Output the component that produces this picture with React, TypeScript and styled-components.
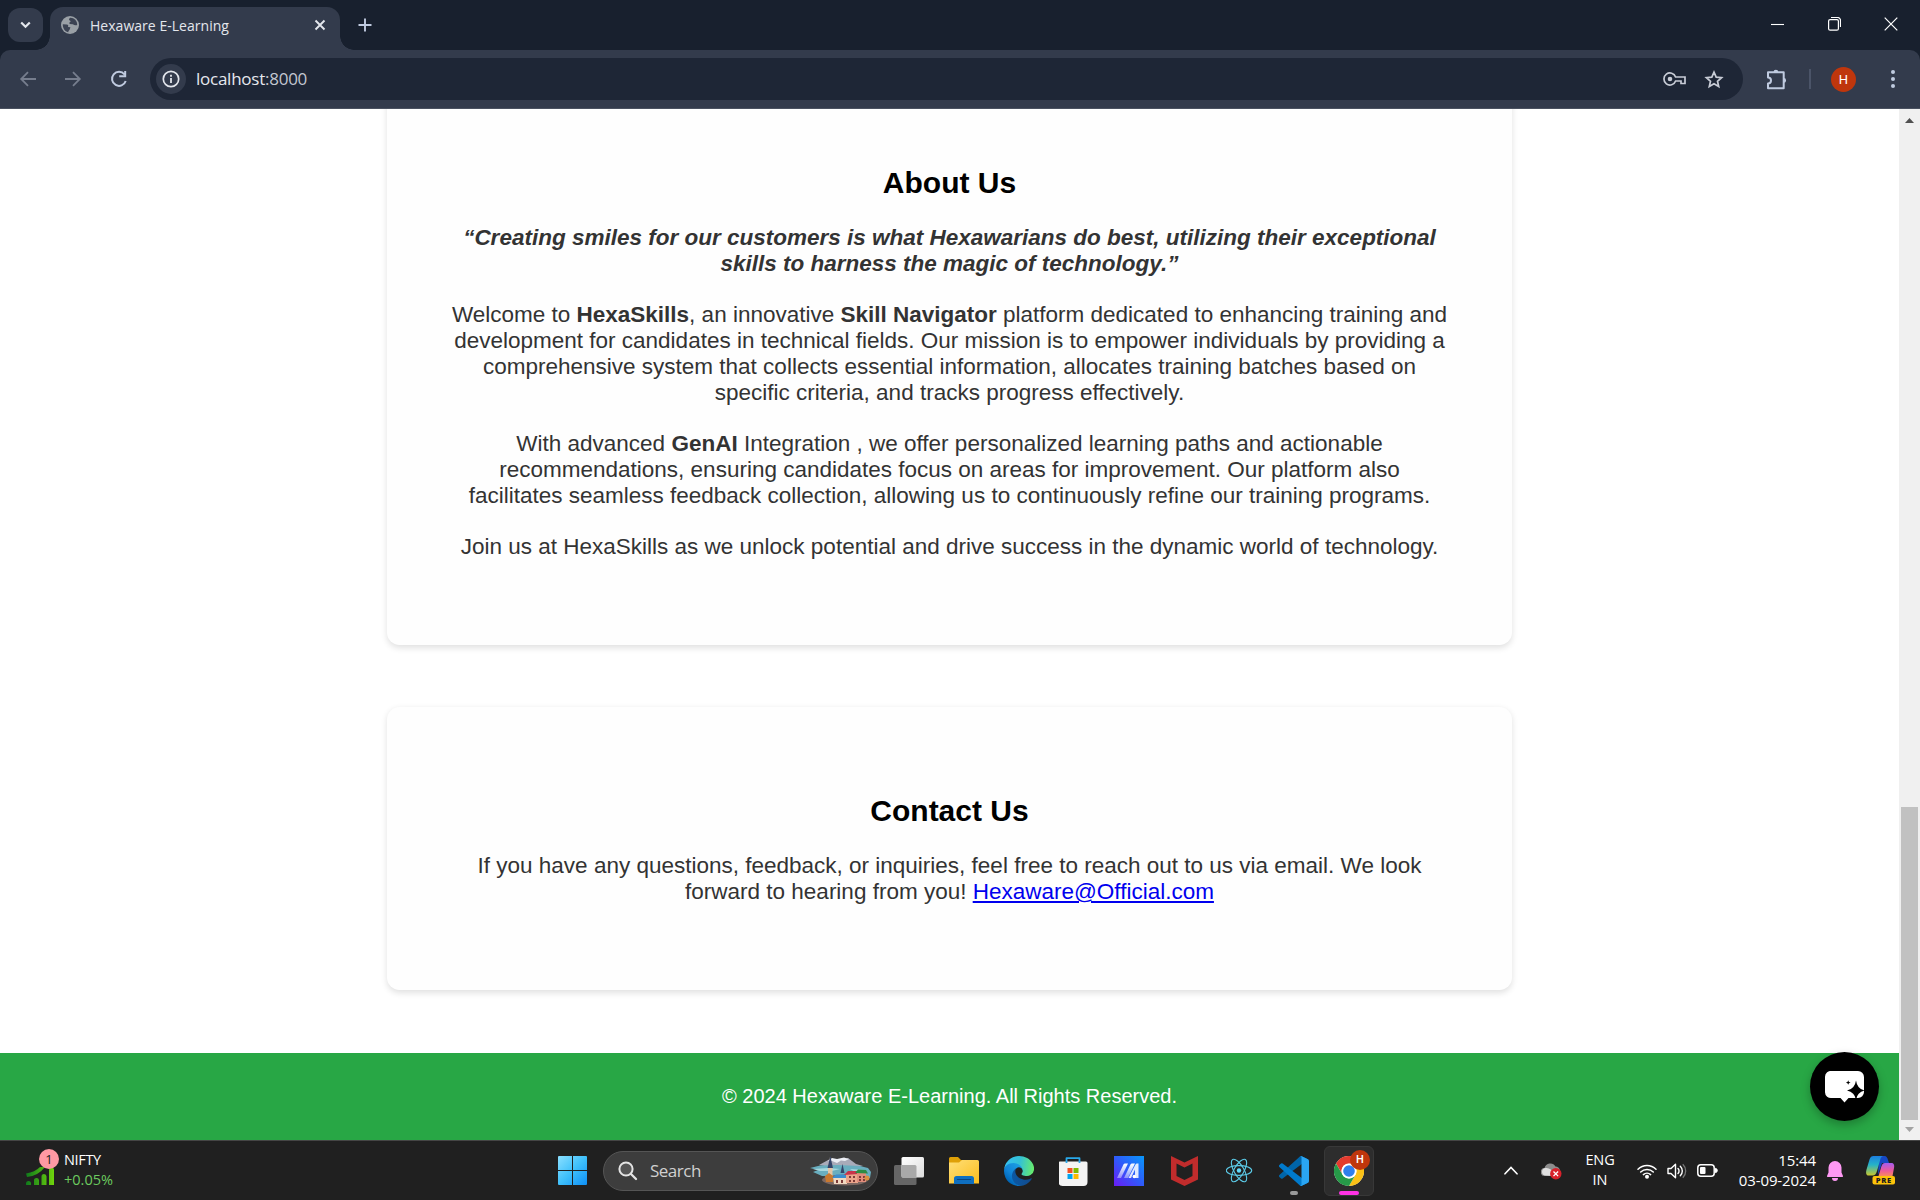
import React from 'react';
import styled, { createGlobalStyle } from 'styled-components';

const Global = createGlobalStyle`
  * { box-sizing: border-box; }
  html, body { margin: 0; padding: 0; overflow: hidden; background: #fff; }
  svg { display: block; flex: none; }
`;

const uiFont = `"Open Sans", "Noto Sans", sans-serif`;

const Screen = styled.div`
  width: 1920px; height: 1200px; display: flex; flex-direction: column;
  font-family: ${uiFont}; overflow: hidden;
`;

/* ---------- browser chrome ---------- */
const TabStrip = styled.div`
  height: 50px; flex: none; background: #18202e; display: flex; align-items: flex-start; padding-left: 8px;
`;
const TabSearch = styled.div`
  width: 35px; height: 34px; margin-top: 8px; border-radius: 12px; background: #333b4c;
  display: flex; align-items: center; justify-content: center;
`;
const Tab = styled.div`
  position: relative; width: 290px; height: 43px; margin: 7px 0 0 7px; border-radius: 13px 13px 0 0; background: #333b4c;
  display: flex; align-items: center; padding: 0 13px 7px 11px; color: #e3e6ec; font-size: 14px;
  &::before, &::after { content: ''; position: absolute; bottom: 0; width: 14px; height: 14px; }
  &::before { left: -14px; background: radial-gradient(circle at 0 0, transparent 13.5px, #333b4c 14px); }
  &::after { right: -14px; background: radial-gradient(circle at 100% 0, transparent 13.5px, #333b4c 14px); }
`;
const TabTitle = styled.span`
  flex: 1; margin-left: 11px; line-height: 20px; letter-spacing: 0.03px; white-space: nowrap; padding-top: 1px;
`;
const NewTab = styled.div`margin: 18px 0 0 18px;`;
const WindowButtons = styled.div`
  margin-left: auto; display: flex; align-items: center; gap: 43px; padding: 17px 22px 0 0;
`;
const ToolbarWrap = styled.div`background: #18202e; flex: none;`;
const Toolbar = styled.div`
  height: 59px; background: #333b4c; border-radius: 10px 10px 0 0; border-bottom: 1px solid #4a5160;
  display: flex; align-items: center; padding: 0 15px 0 18px;
`;
const NavButtons = styled.div`display: flex; align-items: center; gap: 27px; width: 132px; padding-left: 1px;`;
const Omnibox = styled.div`
  width: 1593px; height: 42px; border-radius: 21px; background: #1e2636; display: flex; align-items: center; padding: 0 19px 0 6px;
`;
const InfoChip = styled.div`
  width: 30px; height: 30px; border-radius: 50%; background: #333b4c; display: flex; align-items: center; justify-content: center;
`;
const Url = styled.span`
  margin-left: 10px; flex: 1; font-size: 17px; letter-spacing: -0.25px; line-height: 24px; color: #e6e8ee;
  span { color: #c3c7d1; }
`;
const OmniIcons = styled.div`display: flex; align-items: center; gap: 17px;`;
const ToolbarRight = styled.div`display: flex; align-items: center; padding-left: 23px;`;
const Divider = styled.div`width: 2px; height: 20px; background: #4b5468; margin: 0 20px 0 21px;`;
const Avatar = styled.div<{ $size: number }>`
  width: ${p => p.$size}px; height: ${p => p.$size}px; border-radius: 50%; background: #bf360c; color: #fff;
  display: flex; align-items: center; justify-content: center;
  font: ${p => (p.$size > 20 ? '400 13px' : '500 11px')}/1 Roboto, sans-serif;
`;
const MenuDots = styled.div`margin-left: 35px;`;

/* ---------- page ---------- */
const Viewport = styled.div`
  height: 1031px; flex: none; display: flex; background: #fff; position: relative;
  font-family: "Liberation Sans", Arial, sans-serif;
`;
const Page = styled.div`
  width: 1899px; height: 1031px; overflow: hidden; display: flex; flex-direction: column; align-items: center;
`;
const Card = styled.section<{ $first?: boolean }>`
  width: 1125px; height: ${p => (p.$first ? 556 : 283)}px; flex: none; background: #fefefe;
  margin-top: ${p => (p.$first ? -20 : 62)}px; padding-top: ${p => (p.$first ? 77 : 87)}px;
  border-radius: 12.5px; box-shadow: 0 2.5px 6px rgba(0, 0, 0, 0.12); text-align: center;
`;
const Heading = styled.h2`
  margin: 0 0 25px; font-size: 30px; line-height: 34px; font-weight: 700; color: #000;
`;
const Para = styled.p<{ $quote?: boolean }>`
  margin: 0 0 25px; font-size: 22.5px; line-height: 26px; color: #333;
  font-weight: ${p => (p.$quote ? 700 : 400)}; font-style: ${p => (p.$quote ? 'italic' : 'normal')};
`;
const Line = styled.span`
  display: block; white-space: nowrap;
`;
const Mail = styled.a`color: #0000ee; text-decoration: underline;`;
const Footer = styled.footer`
  width: 100%; height: 88px; margin-top: 63px; flex: none; background: #28a745; color: #fff;
  display: flex; align-items: center; justify-content: center; padding-bottom: 2px; font-size: 20px;
`;
const Scrollbar = styled.div`
  width: 21px; background: #f0f0f0; display: flex; flex-direction: column; align-items: center; padding: 9px 0 8px;
`;
const Thumb = styled.div`width: 17px; height: 313px; margin: auto 0 7px; background: #c1c1c1;`;
const ChatButton = styled.div`
  position: absolute; left: 1810px; top: 943px; width: 69px; height: 69px; border-radius: 50%; background: #000;
  box-shadow: 0 4px 10px rgba(0, 0, 0, 0.25); display: flex; align-items: center; justify-content: center;
`;

/* ---------- taskbar ---------- */
const Taskbar = styled.div`
  height: 60px; flex: none; background: #202020; border-top: 1px solid #454545; display: flex; align-items: center;
  color: #fff; font-size: 15px;
`;
const Widget = styled.div`display: flex; align-items: center; width: 532px; padding-left: 26px;`;
const WidgetIcon = styled.div`position: relative; width: 34px; height: 42px; padding-top: 17px;`;
const Count = styled.div`
  position: absolute; left: 13px; top: -1px; width: 20px; height: 20px; border-radius: 50%; background: #ff99a4; color: #222;
  font-size: 13px; line-height: 20px; text-align: center;
`;
const WidgetText = styled.div`
  margin: 0 0 2px 4px; font-size: 14.5px; line-height: 20px; letter-spacing: -0.35px;
  b { display: block; font-weight: 400; }
  span { color: #6ccb5f; letter-spacing: 0; }
`;
const Slot = styled.div<{ $active?: boolean }>`
  position: relative; width: 50px; height: 50px; margin-right: 5px; border-radius: 6px; display: flex; align-items: center; justify-content: center;
  background: ${p => (p.$active ? '#2d2d2d' : 'transparent')};
  border: 1px solid ${p => (p.$active ? '#383838' : 'transparent')};
`;
const Indicator = styled.div<{ $w: number; $color: string }>`
  position: absolute; bottom: 0; left: 50%; width: ${p => p.$w}px; height: 4px; margin-left: ${p => -p.$w / 2}px;
  border-radius: 2px; background: ${p => p.$color};
`;
const Badge = styled.div`position: absolute; right: 3px; top: 3px;`;
const Start = styled.div`width: 71px; padding-left: 26px;`;
const SearchBox = styled.div`
  width: 275px; height: 40px; border-radius: 20px; background: #3d3d3d; border: 1px solid #555; display: flex; align-items: center;
  padding: 0 5px 0 14px; margin-right: 6px;
`;
const SearchLabel = styled.span`flex: 1; margin-left: 12px; font-size: 17px; letter-spacing: -0.5px; color: #d0d0d0; line-height: 24px;`;
const Tray = styled.div`margin-left: auto; display: flex; align-items: center; padding-right: 25px;`;
const Lang = styled.div`width: 40px; margin: 0 17px 2px 18px; text-align: center; font-size: 14.5px; line-height: 20px; letter-spacing: -0.1px;`;
const Clock = styled.div`width: 98px; margin-bottom: 2px; text-align: right; font-size: 15px; line-height: 20px; letter-spacing: -0.1px; white-space: nowrap;`;
const TrayIcon = styled.div<{ $l: number }>`margin-left: ${p => p.$l}px;`;

const Globe = () => (
  <svg width="18" height="18" viewBox="0 0 18 18">
    <circle cx="9" cy="9" r="9" fill="#9aa0a6" />
    <path d="M1.8 8.2 L5.8 8.6 C7.3 8.8 7.6 9.9 7 11 L9.4 11.2 L8.8 13.2 C8.4 14.2 7.4 14.6 7.2 16.2 C3.9 15.3 1.6 12.2 1.8 8.2Z M9.2 1.8 C7.8 2.6 7.6 4.2 8.8 4.6 C10.3 5 9.5 6.3 8.4 6.6 L8.6 8 L11.8 8.2 C13.2 9.3 14.6 9.6 16.2 9 C16.4 4.8 13 1.6 9.2 1.8Z" fill="#3c4353" />
  </svg>
);

const WindowsLogo = () => (
  <svg width="29" height="29" viewBox="0 0 29 29">
    <defs><linearGradient id="win" x1="0" y1="0" x2="29" y2="29" gradientUnits="userSpaceOnUse"><stop stopColor="#8be0ff" /><stop offset=".5" stopColor="#3fc0fb" /><stop offset="1" stopColor="#0e8ff5" /></linearGradient></defs>
    <path d="M1 0h13v14H0V1a1 1 0 0 1 1-1zM15 0h13a1 1 0 0 1 1 1v13H15zM0 15h14v14H1a1 1 0 0 1-1-1zM15 15h14v13a1 1 0 0 1-1 1H15z" fill="url(#win)" />
  </svg>
);

const Town = () => (
  <svg width="62" height="30" viewBox="0 0 62 30">
    <path d="M9 9 L20 3 L28 5 L38 2 L46 8 L53 10 L30 13Z" fill="#a9abb9" />
    <path d="M18 5 L22 2 L27 3 L34 1.500 L39 3 L35 5 L31 4.500 L27 7 L22 5Z" fill="#eceef4" />
    <path d="M0 12 L10 9.500 L28 9 L50 10 L58 12 L61 16 L60 22 L12 20 L3 16 L8 14Z" fill="#69aebf" />
    <path d="M3 13 L18 12 L30 13 L22 15 L10 15Z M40 13 L55 14 L45 16Z" fill="#a7d8df" />
    <ellipse cx="35" cy="24" rx="23" ry="5.500" fill="#7d6862" />
    <path d="M18 26 V11 L20 1 L22.500 11 V26Z" fill="#e3c5a5" /><path d="M17.500 12 L20.300 0 L23 12Z" fill="#34456b" />
    <path d="M30.500 17 L32.500 8 L34.500 17Z" fill="#34456b" />
    <path d="M15 20 l4-3 4 3 v6 h-7z" fill="#c9792f" />
    <path d="M23 21 h14 v7 h-13z" fill="#f0d9c0" /><path d="M22 22 L26 18.500 L35 18.500 L38 22Z" fill="#3a8ed0" />
    <path d="M36 18 h12 v9 h-12z" fill="#eba58b" /><path d="M34 19 L38 15 L47 15 L49 18Z" fill="#c9334a" />
    <path d="M47 16 h9 v10 h-9z" fill="#e08d7b" /><path d="M45 17 L48 13.500 L56 14 L58 17.500Z" fill="#2c8c44" />
    <path d="M26 24h2v3h-2zM31 24h2v3h-2zM39 20h2v2h-2zM43 20h2v2h-2zM39 24h2v2h-2zM43 24h2v2h-2zM49 20h2v2h-2zM53 20h2v2h-2zM49 23h2v2h-2zM53 23h2v2h-2z" fill="#7d3b38" />
    <circle cx="57" cy="22" r="2.500" fill="#d98f3f" />
  </svg>
);

const TaskView = () => (
  <svg width="30" height="28" viewBox="0 0 30 28">
    <defs><linearGradient id="tv" x1="0" y1="0" x2="1" y2="1"><stop stopColor="#fff" /><stop offset="1" stopColor="#dcdcdc" /></linearGradient></defs>
    <rect x="0" y="8" width="22.500" height="20" rx="1.500" fill="#666" />
    <rect x="7.500" y="0" width="22.500" height="20.500" rx="1.500" fill="url(#tv)" />
    <path d="M7.500 8H21a1.500 1.500 0 0 1 1.500 1.500v11H9a1.500 1.500 0 0 1-1.500-1.500z" fill="#a9a9a9" />
  </svg>
);

const Folder = () => (
  <svg width="30" height="27" viewBox="0 0 30 27">
    <defs><linearGradient id="fo" x1="0" y1="0" x2="1" y2="1"><stop stopColor="#ffdf78" /><stop offset="1" stopColor="#fbbd1d" /></linearGradient></defs>
    <path d="M0 1.500A1.500 1.500 0 0 1 1.500 0H9l3 3h16v5H0z" fill="#dfa007" />
    <path d="M0 5.500h10l3-2.500h15.500A1.500 1.500 0 0 1 30 4.500V26.500H0z" fill="url(#fo)" />
    <path d="M5 27V21.500A2.500 2.500 0 0 1 7.500 19h15a2.500 2.500 0 0 1 2.500 2.500V27z" fill="#0f6fc0" />
    <path d="M8.500 22.500h13" stroke="#0a4580" strokeWidth="1.200" strokeLinecap="round" />
  </svg>
);

const Edge = () => (
  <svg width="30" height="30" viewBox="0 0 256 256">
    <defs>
      <linearGradient id="e1" x1="63" y1="177" x2="242" y2="177" gradientUnits="userSpaceOnUse"><stop stopColor="#0c59a4" /><stop offset="1" stopColor="#114a8b" /></linearGradient>
      <linearGradient id="e2" x1="157" y1="100" x2="46" y2="221" gradientUnits="userSpaceOnUse"><stop stopColor="#1b9de2" /><stop offset=".6" stopColor="#1184d8" /><stop offset="1" stopColor="#0067b8" /></linearGradient>
      <linearGradient id="e3" x1="10" y1="70" x2="250" y2="110" gradientUnits="userSpaceOnUse"><stop stopColor="#35c1f1" /><stop offset=".5" stopColor="#34c1d5" /><stop offset="1" stopColor="#66eb6e" /></linearGradient>
    </defs>
    <path fill="url(#e1)" d="M231 190.500c-3.400 1.800-6.900 3.400-10.500 4.700a101.700 101.700 0 0 1-35.900 6.500c-47.300 0-88.500-32.500-88.500-74.300a31.500 31.500 0 0 1 16.400-27.300c-42.800 1.800-53.800 46.400-53.800 72.500 0 73.900 68.100 81.400 82.800 81.400 7.900 0 19.800-2.300 27-4.600l1.300-.4a128.300 128.300 0 0 0 66.600-52.800 4 4 0 0 0-5.400-5.700z" />
    <path fill="url(#e2)" d="M105.700 241.400a79.200 79.200 0 0 1-22.700-21.300 80.700 80.700 0 0 1 29.500-120c3.100-1.500 8.500-4.100 15.600-4a32.400 32.400 0 0 1 25.700 13 31.900 31.900 0 0 1 6.300 18.700c0-.2 24.500-79.600-80-79.600-43.900 0-80 41.700-80 78.200a130.200 130.200 0 0 0 12.100 56 128 128 0 0 0 156.400 67 75.500 75.500 0 0 1-62.800-8z" />
    <path fill="url(#e3)" d="M152.300 148.900c-.8 1-3.300 2.500-3.300 5.700 0 2.600 1.700 5.200 4.800 7.300 14.500 10.100 41.800 8.800 41.900 8.800a60.200 60.200 0 0 0 30.500-8.400A61.800 61.800 0 0 0 256.600 109c.3-22.400-8-37.300-11.300-43.900C224 23.600 178.200 0 128.300 0A128 128 0 0 0 .3 126.200c.5-36.500 36.800-66 80-66 3.500 0 23.500.3 42 10.100 16.300 8.600 24.900 18.900 30.800 29.200 6.200 10.700 7.300 24.100 7.300 29.500s-2.700 13.300-8.100 19.900z" />
  </svg>
);

const Store = () => (
  <svg width="30" height="30" viewBox="0.500 0 30 30">
    <path d="M0 7a1.500 1.500 0 0 1 1.500-1.500h26A1.500 1.500 0 0 1 29 7v19a4 4 0 0 1-4 4H4a4 4 0 0 1-4-4z" fill="#f3f3f3" />
    <path d="M8 7V2.200h13V7" fill="none" stroke="#29a9ea" strokeWidth="1.800" strokeLinejoin="round" />
    <path d="M9 12h5v5H9z" fill="#f25022" /><path d="M15 12h5v5h-5z" fill="#7fba00" /><path d="M9 18h5v5H9z" fill="#00a4ef" /><path d="M15 18h5v5h-5z" fill="#ffb900" />
  </svg>
);

const MyApp = () => (
  <svg width="30" height="30" viewBox="0 0 30 30">
    <defs>
      <linearGradient id="my" x1="0" y1="1" x2="1" y2="0"><stop stopColor="#6a1cf5" /><stop offset=".5" stopColor="#2f5bfa" /><stop offset="1" stopColor="#0898fb" /></linearGradient>
      <linearGradient id="fade" x1="0" y1="1" x2="0" y2="0"><stop stopColor="#fff" stopOpacity=".4" /><stop offset="1" stopColor="#fff" /></linearGradient>
    </defs>
    <rect width="30" height="30" fill="url(#my)" />
    <path d="M3 22 L9.500 8.500 Q10 7.500 11 7.500 H14 L7 22Z" fill="url(#fade)" />
    <path d="M10 22 L16.500 8.500 Q17 7.500 18 7.500 H21 L14 22Z" fill="url(#fade)" />
    <path d="M24.500 7.500V22H21V13.500L17 22H14.500L21.500 8.500Q22 7.500 23 7.500Z" fill="#fff" fillOpacity=".85" />
    <circle cx="20.300" cy="20.500" r="1.700" fill="#fff" />
  </svg>
);

const Shield = () => (
  <svg width="27" height="30" viewBox="0 0 27 30">
    <path d="M0 0 L13.500 6.500 L27 0 V23.500 L13.500 30 L0 23.500Z M5.500 7.500 V20 L13.500 24 L21.500 20 V7.500 L13.500 11.500Z" fillRule="evenodd" fill="#c12c2c" />
  </svg>
);

const ReactLogo = () => (
  <svg width="27" height="25" viewBox="-13 -12.500 27 25">
    <circle r="2.200" fill="#61dafb" />
    <g fill="none" stroke="#5ccbe8" strokeWidth="1.100"><ellipse rx="12.700" ry="4.900" /><ellipse rx="12.700" ry="4.900" transform="rotate(60)" /><ellipse rx="12.700" ry="4.900" transform="rotate(120)" /></g>
  </svg>
);

const VsCode = () => (
  <svg width="30" height="30" viewBox="0 0 100 100">
    <path d="M96.500 10.800 75.900.9a6.200 6.200 0 0 0-7.100 1.200L1.300 63.600a4.200 4.200 0 0 0 0 6.100l5.500 5a4.200 4.200 0 0 0 5.300.3L93.400 13.300c2.700-2 6.600-.1 6.600 3.300v-.2c0-2.400-1.400-4.600-3.500-5.600z" fill="#0065a9" />
    <path d="m96.500 89.200-20.600 9.900a6.200 6.200 0 0 1-7.100-1.200L1.300 36.400a4.200 4.200 0 0 1 0-6.100l5.500-5a4.200 4.200 0 0 1 5.300-.3l81.300 61.700c2.700 2 6.600.1 6.600-3.300v.2c0 2.400-1.400 4.600-3.500 5.600z" fill="#007acc" />
    <path d="M75.900 99.100a6.200 6.200 0 0 1-7.100-1.200c2.300 2.300 6.200.7 6.200-2.600V4.700c0-3.300-3.900-4.900-6.200-2.600A6.200 6.200 0 0 1 75.900.9l20.600 9.900a6.200 6.200 0 0 1 3.500 5.600v67.200a6.200 6.200 0 0 1-3.500 5.600z" fill="#2aa5f2" />
  </svg>
);

const Chrome = () => (
  <svg width="30" height="30" viewBox="0 0 48 48">
    <circle cx="24" cy="24" r="24" fill="#fff" />
    <path d="M24 12H44.800A24 24 0 0 0 3.200 12L13.600 30A12 12 0 0 1 24 12z" fill="#e33b2e" />
    <path d="M34.400 30 24 48A24 24 0 0 0 44.800 12H24A12 12 0 0 1 34.400 30z" fill="#fbc116" />
    <path d="M13.600 30 3.200 12A24 24 0 0 0 24 48L34.400 30A12 12 0 0 1 13.600 30z" fill="#269a48" />
    <circle cx="24" cy="24" r="11.800" fill="#fff" /><circle cx="24" cy="24" r="9.300" fill="#2f7fed" />
  </svg>
);

const Copilot = () => (
  <svg width="29" height="29" viewBox="0 0 29 29">
    <defs>
      <linearGradient id="c1" x1="0" y1="0" x2="0" y2="1"><stop stopColor="#1c7fe0" /><stop offset=".45" stopColor="#25b2c8" /><stop offset="1" stopColor="#c9c92c" /></linearGradient>
      <linearGradient id="c2" x1="0" y1="0" x2="0" y2="1"><stop stopColor="#a45cf0" /><stop offset=".6" stopColor="#ee5a9a" /><stop offset="1" stopColor="#f98a5c" /></linearGradient>
    </defs>
    <path d="M13 0H18.500C20.500 0 21.500 2 22 4L23 7H16L12 19Z" fill="#1648c4" />
    <path d="M7.500 0H17C15 .5 14.500 2.500 14 4.500L11 15C10 18 9 19.500 6.500 19.500H3C0 19.500-.3 17 .4 14L3.500 3.500C4.300 1 5.500 0 7.500 0z" fill="url(#c1)" />
    <path d="M19 7H25C28 7 28.500 9 28 12L26.500 20H12.500L15.500 10C16.300 8 17 7 19 7z" fill="url(#c2)" />
    <rect x="6.500" y="20" width="22.500" height="8.500" rx="2" fill="#fdc30a" />
    <text x="17.800" y="26.900" fontFamily="Open Sans, sans-serif" fontSize="7.600" fontWeight="800" textAnchor="middle" fill="#1d1d1d" letterSpacing=".6">PRE</text>
  </svg>
);

export default function App() {
  return (
    <Screen>
      <Global />
      <TabStrip>
        <TabSearch><svg width="11" height="8" viewBox="0 0 11 8"><path d="M1.200 1.500 5.500 5.800 9.800 1.500" fill="none" stroke="#e3e6ec" strokeWidth="2.200" /></svg></TabSearch>
        <Tab>
          <Globe />
          <TabTitle>Hexaware E-Learning</TabTitle>
          <svg width="14" height="12" viewBox="0 0 12 12"><path d="M1.500 1.500l9 9M10.500 1.500l-9 9" stroke="#e3e6ec" strokeWidth="1.900" /></svg>
        </Tab>
        <NewTab><svg width="14" height="14" viewBox="0 0 14 14"><path d="M7 .5v13M.5 7h13" stroke="#c0cbe0" strokeWidth="1.900" /></svg></NewTab>
        <WindowButtons>
          <svg width="14" height="14" viewBox="0 0 14 14"><path d="M0 7.500h13" stroke="#fff" strokeWidth="1.100" /></svg>
          <svg width="13" height="14" viewBox="0 0 13 14"><path d="M3 .5h6.500a3 3 0 0 1 3 3V10" fill="none" stroke="#fff" strokeWidth="1.200" /><rect x=".6" y="2.600" width="9.800" height="10.600" rx="1.500" fill="none" stroke="#fff" strokeWidth="1.200" /></svg>
          <svg width="14" height="14" viewBox="0 0 14 14"><path d="M.7.700l12.600 12.600M13.300.7.700 13.300" stroke="#fff" strokeWidth="1.200" /></svg>
        </WindowButtons>
      </TabStrip>
      <ToolbarWrap>
        <Toolbar>
          <NavButtons>
            <svg width="18" height="16" viewBox="0 0 18 16"><path d="M17 8H2.500M9 1.200 2.200 8 9 14.800" fill="none" stroke="#767d8d" strokeWidth="1.800" /></svg>
            <svg width="18" height="16" viewBox="0 0 18 16"><path d="M1 8h14.500M9 1.200 15.800 8 9 14.800" fill="none" stroke="#767d8d" strokeWidth="1.800" /></svg>
            <svg width="20" height="18" viewBox="0 0 20 18"><path d="M15.500 4.500A7 7 0 1 0 16.700 11M16.200 1v5.300h-6" fill="none" stroke="#c0cbe0" strokeWidth="2" /></svg>
          </NavButtons>
          <Omnibox>
            <InfoChip><svg width="18" height="18" viewBox="0 0 18 18"><circle cx="9" cy="9" r="7.700" fill="none" stroke="#e3e6ec" strokeWidth="1.700" /><path d="M9 8v5M9 4.800v1.900" stroke="#e3e6ec" strokeWidth="1.800" /></svg></InfoChip>
            <Url>localhost<span>:8000</span></Url>
            <OmniIcons>
              <svg width="24" height="14" viewBox="0 0 24 14"><path d="M12.600 5H22v6.500h-4V9h-5.400A6 6 0 1 1 12.600 5z" fill="none" stroke="#c8ccd6" strokeWidth="1.700" /><circle cx="7" cy="7" r="2.300" fill="#c8ccd6" /></svg>
              <svg width="20" height="19" viewBox="0 0 20 19"><path d="M10 2.200 12.200 7.200 17.600 7.700 13.500 11.300 14.700 16.600 10 13.800 5.300 16.600 6.500 11.300 2.400 7.700 7.800 7.200Z" fill="none" stroke="#c8ccd6" strokeWidth="1.700" /></svg>
            </OmniIcons>
          </Omnibox>
          <ToolbarRight>
            <svg width="22" height="21" viewBox="0 0 22 21"><path d="M2 3.200H17.700V19.300H2V14.500A3 3 0 0 0 2 8.500Z" fill="none" stroke="#c0cbe0" strokeWidth="2" strokeLinejoin="round" /><path d="M7.500 3.200a2.400 2.400 0 0 1 4.800 0zM17.700 9a2.400 2.400 0 0 1 0 4.800z" fill="#c0cbe0" /></svg>
            <Divider />
            <Avatar $size={25}>H</Avatar>
            <MenuDots><svg width="4" height="18" viewBox="0 0 4 18"><g fill="#c0cbe0"><circle cx="2" cy="2" r="2" /><circle cx="2" cy="9" r="2" /><circle cx="2" cy="16" r="2" /></g></svg></MenuDots>
          </ToolbarRight>
        </Toolbar>
      </ToolbarWrap>

      <Viewport>
        <Page>
          <Card $first>
            <Heading>About Us</Heading>
            <Para $quote>
              <Line>“Creating smiles for our customers is what Hexawarians do best, utilizing their exceptional</Line>
              <Line>skills to harness the magic of technology.”</Line>
            </Para>
            <Para>
              <Line>Welcome to <b>HexaSkills</b>, an innovative <b>Skill Navigator</b> platform dedicated to enhancing training and</Line>
              <Line>development for candidates in technical fields. Our mission is to empower individuals by providing a</Line>
              <Line>comprehensive system that collects essential information, allocates training batches based on</Line>
              <Line>specific criteria, and tracks progress effectively.</Line>
            </Para>
            <Para>
              <Line>With advanced <b>GenAI</b> Integration , we offer personalized learning paths and actionable</Line>
              <Line>recommendations, ensuring candidates focus on areas for improvement. Our platform also</Line>
              <Line>facilitates seamless feedback collection, allowing us to continuously refine our training programs.</Line>
            </Para>
            <Para><Line>Join us at HexaSkills as we unlock potential and drive success in the dynamic world of technology.</Line></Para>
          </Card>
          <Card>
            <Heading>Contact Us</Heading>
            <Para>
              <Line>If you have any questions, feedback, or inquiries, feel free to reach out to us via email. We look</Line>
              <Line>forward to hearing from you! <Mail>Hexaware@Official.com</Mail></Line>
            </Para>
          </Card>
          <Footer>© 2024 Hexaware E-Learning. All Rights Reserved.</Footer>
        </Page>
        <Scrollbar>
          <svg width="9" height="5" viewBox="0 0 9 5"><path d="M0 5 4.500 0 9 5z" fill="#505050" /></svg>
          <Thumb />
          <svg width="9" height="5" viewBox="0 0 9 5"><path d="M0 0h9L4.500 5z" fill="#a3a3a3" /></svg>
        </Scrollbar>
        <ChatButton>
          <svg width="40" height="32" viewBox="0 0 40 32">
            <path d="M7 0H33a6 6 0 0 1 6 6V21a6 6 0 0 1-6 6H23.500L19.500 31.500 15.500 27H7A6 6 0 0 1 0 21V6A6 6 0 0 1 7 0z" fill="#fff" />
            <path d="M31 9.500Q32.200 18 39.500 19.500 32.200 21 31 29 29.800 21 22 19.500 29.800 18 31 9.500z" fill="#000" />
            <path d="M23.200 9.200 23.900 10.900 25.600 11.500 23.900 12.200 23.200 13.800 22.500 12.200 20.900 11.500 22.500 10.900z" fill="#000" />
          </svg>
        </ChatButton>
      </Viewport>

      <Taskbar>
        <Widget>
          <WidgetIcon>
            <svg width="28" height="18" viewBox="0 0 28 18"><defs><linearGradient id="g" x1="0" y1="0" x2="1" y2="0"><stop stopColor="#0f7a1c" /><stop offset="1" stopColor="#6fd40c" /></linearGradient></defs><path d="M0 16.500a2.500 2.500 0 0 1 5 0v1.500H0zM8 14a2 2 0 0 1 5-1v5H8zM15.500 9.500a2.300 2.300 0 0 1 5 0V18h-5zM23 3a2.500 2.500 0 0 1 5 0V18h-5zM0 6.500Q9 5 14 0h5Q12 9 1 10z" fill="url(#g)" /></svg>
            <Count>1</Count>
          </WidgetIcon>
          <WidgetText><b>NIFTY</b><span>+0.05%</span></WidgetText>
        </Widget>
        <Start><WindowsLogo /></Start>
        <SearchBox>
          <svg width="20" height="20" viewBox="0 0 20 20"><circle cx="8" cy="8" r="6.600" fill="#555" stroke="#e4e4e4" strokeWidth="2" /><path d="M13 13l5 5" stroke="#e4e4e4" strokeWidth="2.300" strokeLinecap="round" /></svg>
          <SearchLabel>Search</SearchLabel>
          <Town />
        </SearchBox>
        <Slot><TaskView /></Slot>
        <Slot><Folder /></Slot>
        <Slot><Edge /></Slot>
        <Slot><Store /></Slot>
        <Slot><MyApp /></Slot>
        <Slot><Shield /></Slot>
        <Slot><ReactLogo /></Slot>
        <Slot><VsCode /><Indicator $w={8} $color="#9a9a9a" /></Slot>
        <Slot $active><Chrome /><Badge><Avatar $size={20}>H</Avatar></Badge><Indicator $w={20} $color="#ff32e4" /></Slot>
        <Tray>
          <svg width="14" height="9" viewBox="0 0 14 9"><path d="M1 7.800 7 1.500 13 7.800" fill="none" stroke="#fff" strokeWidth="1.600" strokeLinecap="round" /></svg>
          <TrayIcon $l={23}>
            <svg width="21" height="18" viewBox="0 0 21 18"><path d="M4 14a4 4 0 0 1-.5-8 6 6 0 0 1 11-1.500 4.500 4.500 0 0 1 2 8.500z" fill="#8d8d8d" /><path d="M4 13.500a3.800 3.800 0 0 1 .5-7.500c4-.5 6 2 9 5l-3 3z" fill="#e0e0e0" /><circle cx="14.800" cy="11.800" r="5.700" fill="#d8212b" /><path d="M12.500 9.500l4.600 4.600M17.100 9.500l-4.600 4.600" stroke="#fff" strokeWidth="1.300" /></svg>
          </TrayIcon>
          <Lang>ENG<br />IN</Lang>
          <svg width="20" height="16" viewBox="0 0 20 16"><g fill="none" stroke="#fff" strokeWidth="1.500" strokeLinecap="round"><path d="M1 6.200a12.700 12.700 0 0 1 18 0M3.700 9a9 9 0 0 1 12.600 0M6.400 11.600a5.200 5.200 0 0 1 7.200 0" /></g><circle cx="10" cy="13.700" r="2" fill="#fff" /></svg>
          <TrayIcon $l={10}><svg width="20" height="16" viewBox="0 0 20 16"><path d="M1 5.500h3L8.500 1.200v13.600L4 10.500H1z" fill="none" stroke="#fff" strokeWidth="1.400" strokeLinejoin="round" /><path d="M11 5.500a3.500 3.500 0 0 1 0 5M13.300 3.300a6.500 6.500 0 0 1 0 9.400" fill="none" stroke="#fff" strokeWidth="1.400" strokeLinecap="round" /><path d="M15.800 1.200a9.500 9.500 0 0 1 0 13.600" fill="none" stroke="#777" strokeWidth="1.300" /></svg></TrayIcon>
          <TrayIcon $l={10}><svg width="21" height="13" viewBox="0 0 21 13"><rect x=".8" y=".8" width="16.400" height="11.400" rx="3" fill="none" stroke="#fff" strokeWidth="1.500" /><rect x="3" y="3" width="5.500" height="7" rx="1" fill="#fff" /><path d="M18.500 4.300q1.800.4 1.800 2.200t-1.800 2.200z" fill="#fff" stroke="#fff" /></svg></TrayIcon>
          <Clock>15:44<br />03-09-2024</Clock>
          <TrayIcon $l={10}><svg width="18" height="20" viewBox="0 0 18 20"><path d="M9 0a6.500 6.500 0 0 1 6.500 6.500v5l1.500 3.500q.3 1-.8 1H1.800Q.7 16 1 15l1.500-3.500v-5A6.500 6.500 0 0 1 9 0zM6 17h6a3 3 0 0 1-6 0z" fill="#ff99f4" /></svg></TrayIcon>
          <TrayIcon $l={22}><Copilot /></TrayIcon>
        </Tray>
      </Taskbar>
    </Screen>
  );
}
